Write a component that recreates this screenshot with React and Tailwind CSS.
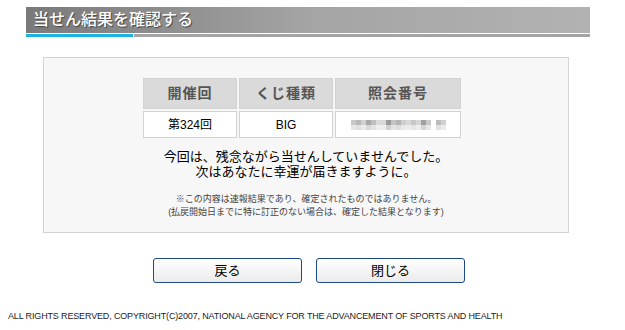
export default function App() {
  const font = { fontFamily: '"Liberation Sans", "Noto Sans CJK JP", sans-serif' };
  const mosaic = [
    [0, '#c8c8c8'], [1, '#b8b8b8'], [2, '#d0d0d0'], [3, '#a8a8a8'], [4, '#c0c0c0'], [5, '#dadada'],
    [6, '#d8d8d8'], [7, '#9a9a9a'], [8, '#c4c4c4'], [9, '#b4b4b4'], [10, '#cfcfcf'], [11, '#d8d8d8'],
    [12, '#c8c8c8'], [13, '#d6d6d6'], [14, '#a0a0a0'], [15, '#c8c8c8'], [17, '#bcbcbc'], [18, '#d0d0d0'],
  ];

  return (
    <div className="relative h-[330px] w-[625px] overflow-hidden bg-white" style={font}>
      <div className="pl-[26px] pt-[7px]">
        <div className="flex h-[26px] w-[564px] items-center bg-gradient-to-r from-[#7a7a7a] via-[#a4a4a4] to-[#b2b2b2] pl-[7px]">
          <h1 className="text-[16px] font-medium leading-none text-white [text-shadow:1px_1px_1px_#444]">当せん結果を確認する</h1>
        </div>
        <div className="mt-px flex h-[3px] w-[564px]">
          <div className="w-[107px] bg-[#1cb4de]" />
          <div className="w-px bg-white" />
          <div className="flex-1 bg-[#a4a4a4]" />
        </div>
      </div>

      <div className="ml-[43px] mt-[20px] h-[176px] w-[526px] border border-[#d4d4d4] bg-[#f7f7f7] pt-[20px]">
        <div className="ml-[99px] grid w-[318px] grid-cols-[94px_94px_126px] gap-[2px]">
          {['開催回', 'くじ種類', '照会番号'].map((h) => (
            <div key={h} className="flex h-[31px] items-center justify-center border border-[#d2d2d2] bg-[#dadada] text-[14px] font-bold tracking-[1px] text-[#555]">
              {h}
            </div>
          ))}
          <div className="flex h-[27px] items-center justify-center border border-[#d2d2d2] bg-white text-[12px] text-black">第324回</div>
          <div className="flex h-[27px] items-center justify-center border border-[#d2d2d2] bg-white text-[12px] text-black">BIG</div>
          <div className="flex h-[27px] items-center justify-center border border-[#d2d2d2] bg-white">
            <svg width="95" height="10" viewBox="0 0 95 10">
              {mosaic.map(([i, c]) => (
                <rect key={i} x={i * 5} y="0" width="5" height="5" fill={c} />
              ))}
              {mosaic.map(([i, c]) => (
                <rect key={'b' + i} x={i * 5} y="5" width="5" height="5" fill={c} opacity="0.45" />
              ))}
            </svg>
          </div>
        </div>

        <div className="mt-[11px] text-center text-[13px] leading-[15px] text-black">
          <p>今回は、残念ながら当せんしていませんでした。</p>
          <p>次はあなたに幸運が届きますように。</p>
        </div>
        <div className="mt-[14px] text-center text-[9px] leading-[13px] text-[#444]">
          <p>※この内容は速報結果であり、確定されたものではありません。</p>
          <p>(払戻開始日までに特に訂正のない場合は、確定した結果となります)</p>
        </div>
      </div>

      <div className="ml-[153px] mt-[25px] flex gap-[14px]">
        {['戻る', '閉じる'].map((b) => (
          <button
            key={b}
            type="button"
            className="h-[25px] w-[149px] rounded-[3px] border border-[#1d4a86] bg-gradient-to-b from-white to-[#ebebeb] text-[13px] text-black"
          >
            {b}
          </button>
        ))}
      </div>

      <p className="ml-[8px] mt-[29px] text-[9px] leading-none tracking-[-0.15px] text-[#222]">
        ALL RIGHTS RESERVED, COPYRIGHT(C)2007, NATIONAL AGENCY FOR THE ADVANCEMENT OF SPORTS AND HEALTH
      </p>
    </div>
  );
}
